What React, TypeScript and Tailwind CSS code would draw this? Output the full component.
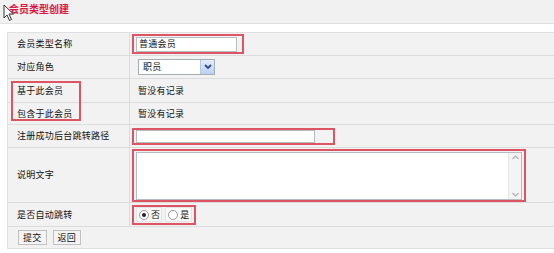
import React from "react";

const font = { fontFamily: '"Noto Sans CJK SC", "Noto Sans", sans-serif' };

function Row({ label, h, children }: { label?: React.ReactNode; h: string; children?: React.ReactNode }) {
  return (
    <div className={`flex ${h} border-b border-[#dcdcdc]`}>
      <div className="w-[122px] shrink-0 border-r border-[#dcdcdc] flex items-center pl-[9px] whitespace-nowrap">{label}</div>
      <div className="flex-1 flex items-center pl-[3px]">{children}</div>
    </div>
  );
}

export default function App() {
  return (
    <div className="w-[554px] h-[253px] bg-white text-[9px] leading-[10px] tracking-[0.25px] text-[#111] relative overflow-hidden" style={font}>
      <div className="h-[24px] bg-[#f1f1f1] border-b border-[#e2e2e2] flex items-start pl-[9px] pt-[4px]">
        <span className="text-[#e0143c] font-bold text-[10px] tracking-[0px]">会员类型创建</span>
      </div>
      <svg className="absolute left-[3px] top-[4px]" width="12" height="18" viewBox="0 0 12 18">
        <path d="M1 1 L1 14 L4 11 L6.5 16.5 L8.5 15.5 L6 10 L10.5 10 Z" fill="#fff" stroke="#333" strokeWidth="1" strokeLinejoin="round" />
      </svg>
      <div className="ml-[7px] mt-[8px] bg-[#f2f2f2] border-t border-l border-[#e0e0e0]">
        <Row h="h-[23px]" label="会员类型名称">
          <span className="inline-flex items-center border-2 border-[#dd5563] h-[20px] pl-[2px] pr-[5px] -ml-px">
            <span className="w-[101px] h-[15px] bg-white border border-[#b5bcc4] flex items-center pl-[2px]">普通会员</span>
          </span>
        </Row>
        <Row h="h-[23px]" label="对应角色">
          <span className="ml-[5px] w-[77px] h-[16px] bg-white border border-[#a5acb2] flex items-center justify-between pl-[4px]">
            <span>职员</span>
            <span className="w-[14px] h-[14px] bg-gradient-to-b from-[#e3edfb] to-[#bcd0f1] border-l border-[#b5c8e9] flex items-center justify-center">
              <svg width="8" height="6" viewBox="0 0 8 6"><path d="M1 1 L4 4 L7 1" fill="none" stroke="#2d4b8c" strokeWidth="1.8" /></svg>
            </span>
          </span>
        </Row>
        <Row h="h-[24px]" label="基于此会员">
          <span className="pl-[5px]">暂没有记录</span>
        </Row>
        <Row h="h-[22px]" label="包含于此会员">
          <span className="pl-[5px]">暂没有记录</span>
        </Row>
        <Row h="h-[23px]" label="注册成功后台跳转路径">
          <span className="inline-flex items-center border-2 border-[#dd5563] h-[17px] pl-[2px] pr-[18px] -ml-px">
            <span className="w-[179px] h-[13px] bg-white border border-[#b5bcc4]"></span>
          </span>
        </Row>
        <Row h="h-[55px]" label="说明文字">
          <span className="inline-flex border-2 border-[#dd5563] h-[53px] pl-[2px] pr-[2px] pt-[1px] pb-[1px] -ml-px">
            <span className="w-[386px] h-[48px] bg-white border border-[#b5bcc4] flex justify-end">
              <span className="w-[13px] h-full bg-[#f4f4f4] border-l border-[#e6e6e6] flex flex-col justify-between items-center py-[1px]">
                <svg width="9" height="7" viewBox="0 0 9 7"><path d="M1.5 5 L4.5 2 L7.5 5" fill="none" stroke="#b0b0b0" strokeWidth="1.2" /></svg>
                <svg width="9" height="7" viewBox="0 0 9 7"><path d="M1.5 2 L4.5 5 L7.5 2" fill="none" stroke="#b0b0b0" strokeWidth="1.2" /></svg>
              </span>
            </span>
          </span>
        </Row>
        <Row h="h-[24px]" label="是否自动跳转">
          <span className="inline-flex items-center border-2 border-[#dd5563] h-[20px] pl-[2px] pr-[2px] gap-[3px] -ml-px">
            <span className="flex items-center gap-[2px] h-[15px] pl-[2px] pr-[1px] bg-[#f8f8f8] border border-[#e4e4e4]">
              <span className="w-[10px] h-[10px] rounded-full border border-[#999] bg-white flex items-center justify-center">
                <span className="w-[4px] h-[4px] rounded-full bg-[#222]"></span>
              </span>
              <span>否</span>
            </span>
            <span className="flex items-center gap-[2px] h-[15px] pl-[2px] pr-[1px] bg-[#f8f8f8] border border-[#e4e4e4]">
              <span className="w-[10px] h-[10px] rounded-full border border-[#999] bg-white"></span>
              <span>是</span>
            </span>
          </span>
        </Row>
        <div className="h-[22px] flex items-center gap-[6px] pl-[10px] border-b border-[#e0e0e0]">
          <span className="h-[15px] px-[4px] bg-[#f4f4f4] border border-[#c0c0c0] flex items-center">提交</span>
          <span className="h-[15px] px-[4px] bg-[#f4f4f4] border border-[#c0c0c0] flex items-center">返回</span>
        </div>
      </div>
      <div className="absolute left-[11px] top-[81px] w-[70px] h-[40px] border-2 border-[#dd5563]"></div>
    </div>
  );
}
